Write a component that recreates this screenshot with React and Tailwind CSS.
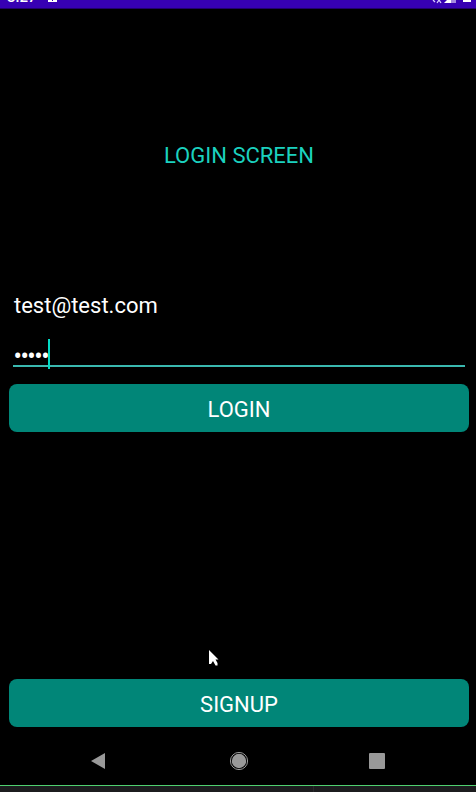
function StatusBar() {
  return (
    <header className="relative h-[9px] shrink-0 overflow-hidden border-b border-[#21006b] bg-[#3700b3] text-white">
      <span className="absolute left-[7px] top-[-11px] text-[15px] leading-[16px] font-medium">3:27</span>
      <svg className="absolute left-[48px] top-0" width="11" height="3" viewBox="0 0 11 3">
        <path d="M0 0H4V1H5V0H9V2H0Z" fill="#fff" />
      </svg>
      <svg className="absolute left-[432px] top-0" width="42" height="4" viewBox="0 0 42 4">
        <path d="M1 0l2 2M5 3l2-3 2 3" stroke="#d9ccff" strokeWidth="1.3" fill="none" />
        <path d="M12 3l3-3h4v3z" fill="#fff" />
        <path d="M19 0h5v3h-5z" fill="#a58ae0" />
        <path d="M31 0h8v2h-8z" fill="#fff" />
      </svg>
    </header>
  );
}

function ActionButton({ children }) {
  return (
    <button className="mx-[9px] flex h-12 w-[460px] shrink-0 items-center justify-center rounded-lg bg-[#018678] pt-[3px] text-[22px] leading-[26px] text-white">
      {children}
    </button>
  );
}

function NavBar() {
  return (
    <nav className="flex h-[58px] shrink-0 items-center pt-[10px] text-[#999]">
      <svg className="ml-[90px]" width="16" height="18" viewBox="0 0 16 18">
        <path d="M1 9L15 1V17Z" fill="currentColor" />
      </svg>
      <svg className="ml-[123px]" width="20" height="20" viewBox="0 0 20 20">
        <circle cx="10" cy="10" r="7.2" fill="currentColor" />
        <circle cx="10" cy="10" r="8.6" fill="none" stroke="currentColor" strokeWidth="1" />
      </svg>
      <span className="ml-[120px] h-4 w-[15.5px] rounded-[1px] bg-[#999]" />
    </nav>
  );
}

export default function App() {
  return (
    <div className="relative flex h-[792px] w-[476px] flex-col overflow-hidden bg-black font-[Roboto,sans-serif]">
      <StatusBar />
      <main className="flex h-[718px] shrink-0 flex-col">
        <h1 className="mt-[134px] ml-[2px] text-center text-[22px] leading-[26px] text-[#1bd1bf]">LOGIN SCREEN</h1>
        <div className="mt-[124px] ml-[14px] text-[22px] leading-[26px] text-white">test@test.com</div>
        <div className="relative mx-[13px] mt-[20px] flex h-[28px] w-[452px] items-center border-b-2 border-[#3ab8af]">
          <span className="ml-[0.5px] pt-[10px] text-[25px] leading-[20px] tracking-[-1.5px] text-white">•••••</span>
          <span className="absolute left-[35px] top-0 h-[30px] w-[2px] bg-[#03dac5]" />
        </div>
        <div className="mt-[17px] flex">
          <ActionButton>LOGIN</ActionButton>
        </div>
        <div className="mt-auto flex">
          <ActionButton>SIGNUP</ActionButton>
        </div>
      </main>
      <NavBar />
      <footer className="flex h-[7px] shrink-0 flex-col bg-[#1c1c1e]">
        <div className="h-px w-full shrink-0 bg-[#4fd070]" />
        <span className="ml-[313px] w-px grow bg-[#29292b]" />
      </footer>
      <svg className="absolute left-[209px] top-[650px]" width="10" height="16" viewBox="0 0 10 16">
        <path d="M0 0L9.5 9.5H6.5L8.5 13V15.5H6.5L4 11L2 14H0Z" fill="#fff" />
      </svg>
    </div>
  );
}
